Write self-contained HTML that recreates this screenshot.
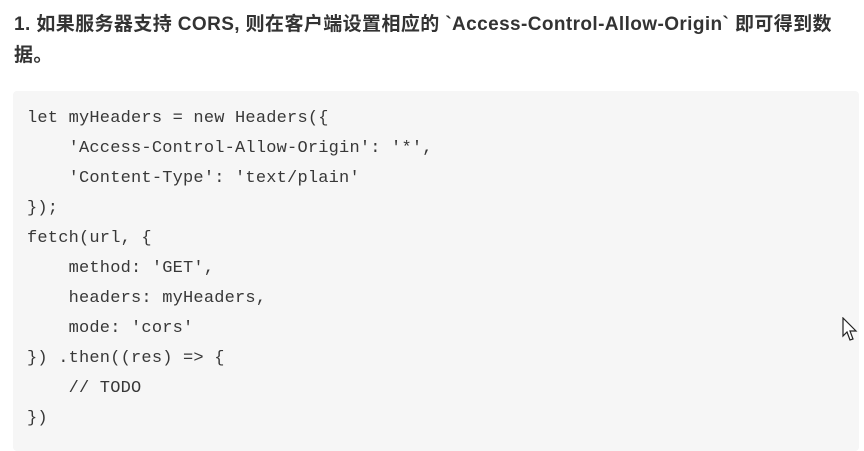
<!DOCTYPE html>
<html><head><meta charset="utf-8"><style>
html,body{margin:0;padding:0;background:#fff;width:864px;height:441px;overflow:hidden}
h3{position:absolute;left:14px;top:9px;margin:0;white-space:nowrap;font:bold 19px/31px "Liberation Sans","Noto Sans CJK SC",sans-serif;color:#333;letter-spacing:0.4px}
.code{position:absolute;left:13px;top:91px;width:846px;height:360px;background:#f6f6f6;border-radius:4px}
pre{position:absolute;left:27px;top:104px;margin:0;font:17px/30px "Liberation Mono",monospace;color:#383838;letter-spacing:0.2px}
svg{position:absolute;left:842px;top:317px}
</style></head><body>
<h3>1. 如果服务器支持 CORS, 则在客户端设置相应的 `Access-Control-Allow-Origin` 即可得到数<br>据。</h3>
<div class="code"></div>
<pre>let myHeaders = new Headers({
    'Access-Control-Allow-Origin': '*',
    'Content-Type': 'text/plain'
});
fetch(url, {
    method: 'GET',
    headers: myHeaders,
    mode: 'cors'
}) .then((res) =&gt; {
    // TODO
})</pre>
<svg width="16" height="26" viewBox="0 0 16 26"><path d="M1 1 L1 19 L5 15 L8 23 L11 22 L8 14 L14 14 Z" fill="#fff" stroke="#222" stroke-width="1.2"/></svg>
</body></html>
